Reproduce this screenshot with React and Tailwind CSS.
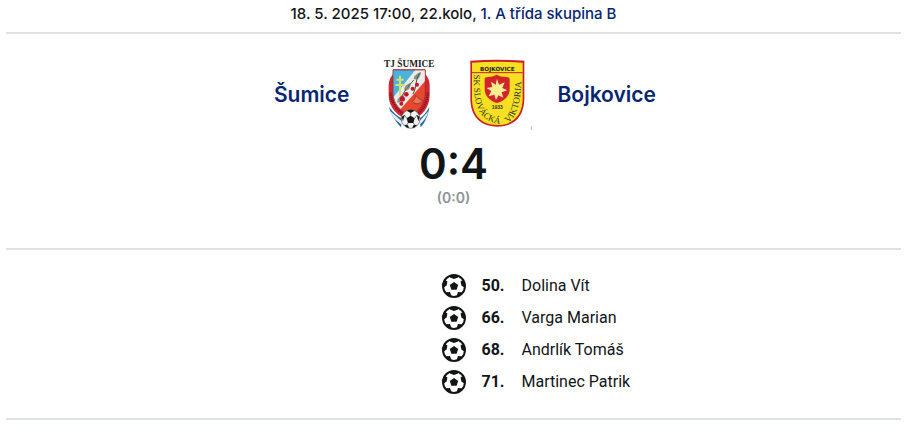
const goals = [
    { minute: '50.', player: 'Dolina Vít' },
    { minute: '66.', player: 'Varga Marian' },
    { minute: '68.', player: 'Andrlík Tomáš' },
    { minute: '71.', player: 'Martinec Patrik' },
];

const SumiceCrest = () => (
    <svg className="h-[78px] w-[76px] shrink-0" viewBox="-9 18 228 234" role="img" aria-label="TJ Šumice">
        <defs>
            <clipPath id="sumice-field">
                <path d="M54 60H151V128C151 160 132 182 107 197C76 185 54 160 54 128Z" />
            </clipPath>
        </defs>
        <text x="103" y="52" textAnchor="middle" fontSize="28" fontWeight="700" fontFamily="Liberation Serif, serif" fill="#222">TJ ŠUMICE</text>
        {/* ribbon behind the ball */}
        <path d="M42 170C54 188 68 199 82 206L78 232C64 216 48 196 42 170Z" fill="#2568a8" />
        <path d="M163 170C154 188 144 199 132 206L137 232C151 216 160 196 163 170Z" fill="#2568a8" />
        <path d="M46 184L82 215L80 224C62 212 52 200 46 184ZM160 184L132 215L134 224C148 212 156 200 160 184Z" fill="#f4f1ee" />
        {/* shield */}
        <path d="M54 58H151L152 74C158 80 163 90 164 104V136C164 172 140 202 106 212C68 202 41 172 41 136V104C42 90 47 80 53 74Z" fill="#d22630" />
        <path d="M47 128C48 158 66 184 98 199M158 128C157 158 143 184 116 199" fill="none" stroke="#6f1520" strokeWidth="7" strokeDasharray="3 3" />
        <g clipPath="url(#sumice-field)">
            <rect x="50" y="56" width="105" height="145" fill="#e5482f" />
            <path d="M50 56H151L50 180Z" fill="#49b3dc" />
            <path d="M124 56H155V88L66 190L50 164V148Z" fill="#eceae4" />
            <path d="M118 88C112 82 124 70 138 66C136 80 130 91 118 88ZM90 122C84 112 94 103 106 99C108 112 102 122 90 122ZM67 158C65 146 75 138 86 134C88 147 80 158 67 158Z" fill="#86938a" />
            <path d="M134 70C119 92 127 108 114 132M116 90L98 112M94 116L76 146" fill="none" stroke="#4b5148" strokeWidth="3" />
            <circle cx="126" cy="104" r="6" fill="#c3162c" />
            <circle cx="113" cy="116" r="6" fill="#c3162c" />
            <circle cx="94" cy="133" r="7" fill="#c3162c" />
            <circle cx="82" cy="147" r="8" fill="#c3162c" />
            <circle cx="79" cy="161" r="6" fill="#c3162c" />
            <path d="M112 154C118 149 122 146 121 136C128 140 128 148 143 151C138 162 122 166 112 154Z" fill="#ed7154" stroke="#842a22" strokeWidth="2" />
        </g>
        <path d="M54 60H151V128C151 160 132 182 107 197C76 185 54 160 54 128Z" fill="none" stroke="#8c2a35" strokeWidth="2" />
        <path d="M75 77V137M64 89H86M61 105H90" fill="none" stroke="#d6de6c" strokeWidth="6" />
        {/* ball */}
        <circle cx="107" cy="207" r="28" fill="#f3f3f3" stroke="#555" strokeWidth="2" />
        <path d="M107 197L119 205L115 219H99L95 205Z" fill="#161616" />
        <path d="M95 182C102 178 112 178 119 182L107 189ZM80 201L89 194L84 214ZM134 201L125 194L130 214ZM88 224L99 226L102 234C96 233 91 229 88 224ZM126 224L115 226L112 234C118 233 123 229 126 224Z" fill="#161616" />
        <path d="M107 189V197M95 205L88 195M119 205L126 195M99 219L94 226M115 219L120 226" stroke="#333" strokeWidth="2" />
    </svg>
);

const BojkoviceCrest = () => (
    <svg className="h-[78px] w-[76px] shrink-0" viewBox="0 18 228 234" role="img" aria-label="SK Slovácká Viktoria Bojkovice">
        <defs>
            <path id="club-name-left" d="M42 73C40 122 44 165 62 191C78 211 100 222 134 222" />
            <path id="club-name-right" d="M144 219C172 200 185 150 185 60" />
        </defs>
        <path d="M31 32Q112 27 193 32V145C193 200 162 230 112 230C62 230 31 200 31 145Z" fill="#c91f2b" />
        <path d="M36 38Q112 33 188 38V145C188 196 160 225 112 225C64 225 36 196 36 145Z" fill="#f7df22" />
        <path d="M36 68H188" stroke="#c91f2b" strokeWidth="3" />
        <text x="112" y="62" textAnchor="middle" fontSize="17" fontWeight="700" fontFamily="DejaVu Sans, sans-serif" fill="#222">BOJKOVICE</text>
        <path d="M74 88Q74 81 84 81Q100 81 110 74Q121 81 138 81Q149 81 149 88V118C149 138 133 154 111 159C90 154 74 138 74 118Z" fill="#d3242b" />
        <path d="M111 86L117 104L134 97L127 114L142 121L125 127L130 143L115 136L108 150L103 134L86 139L94 123L80 114L97 111L93 95L107 104Z" fill="#fbee92" />
        <text x="112" y="178" textAnchor="middle" fontSize="15" fontWeight="700" fontFamily="Liberation Sans, sans-serif" fill="#333">1933</text>
        <text fontSize="27" fontWeight="400" fontFamily="Liberation Serif, serif" fill="#28382a">
            <textPath href="#club-name-left">SK SLOVÁCKÁ</textPath>
        </text>
        <text fontSize="28" fontWeight="400" fontFamily="Liberation Serif, serif" fill="#28382a">
            <textPath href="#club-name-right">VIKTORIA</textPath>
        </text>
        <path d="M214 229V240" stroke="#999" strokeWidth="2" />
    </svg>
);

const BallIcon = () => (
    <svg className="size-6 shrink-0" viewBox="0 0 24 24" aria-hidden="true">
        <circle cx="12" cy="12" r="11" fill="#fff" stroke="#111518" strokeWidth="2" />
        <path d="M12 8L16.2 11L14.6 15.8H9.4L7.8 11Z" fill="#111518" />
        <path d="M8 1.5H16V3.4L12 5L8 3.4ZM1 8.5L3.6 6.2L5.4 7.6L4.6 11.6L1 14ZM23 8.5L20.4 6.2L18.6 7.6L19.4 11.6L23 14ZM4 18.2L8 18L9.6 22.8L6.5 22ZM20 18.2L16 18L14.4 22.8L17.5 22Z" fill="#111518" />
    </svg>
);

const App = () => {
    return (
        <main className="bg-white pl-1.5 pr-[17px] pb-5 font-['Inter',sans-serif] text-[#111518]">
            <header className="border-b-2 border-[#dee1e1] pt-1 pb-2 text-center text-[15px] leading-5 font-medium">
                18. 5. 2025 17:00, 22.kolo, <a href="#soutez" className="text-[#07266f]">1. A třída skupina B</a>
            </header>

            <section className="border-b-2 border-[#dee1e1] pt-[22px] pb-[38px]">
                <div className="grid grid-cols-[1fr_auto_1fr] items-center gap-[22px] text-[21px] font-semibold text-[#07266f]">
                    <a href="#sumice" className="justify-self-end">Šumice</a>
                    <div className="flex gap-3">
                        <SumiceCrest />
                        <BojkoviceCrest />
                    </div>
                    <a href="#bojkovice" className="justify-self-start">Bojkovice</a>
                </div>
                <div className="pt-2 text-center">
                    <h1 className="text-[42px] leading-11 font-semibold">0:4</h1>
                    <p className="text-sm leading-6 font-semibold text-[#8c9296]">(0:0)</p>
                </div>
            </section>

            <section className="border-b-2 border-[#dee1e1] py-5">
                <ul className="ml-[calc(50%-12px)] font-['Roboto',sans-serif] text-base">
                    {goals.map((goal) => (
                        <li key={goal.minute} className="flex h-8 items-center">
                            <BallIcon />
                            <span className="ml-4 w-10 font-bold">{goal.minute}</span>
                            <span>{goal.player}</span>
                        </li>
                    ))}
                </ul>
            </section>
        </main>
    );
};

export default App;
